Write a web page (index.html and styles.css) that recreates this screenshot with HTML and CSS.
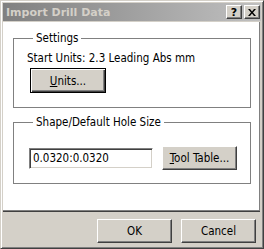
FILE: index.html
```html
<!DOCTYPE html>
<html>
<head>
<meta charset="utf-8">
<link rel="stylesheet" href="styles.css">
</head>
<body>
<div class="window">
  <div class="titlebar">
    <span class="title">Import Drill Data</span>
    <div class="tbtns">
      <span class="tbtn help">?</span>
      <span class="tbtn close"><svg width="8" height="7" viewBox="0 0 8 7"><path d="M0 0h2l2 2.5L6 0h2L5 3.5 8 7H6L4 4.5 2 7H0l3-3.5z" fill="#000"/></svg></span>
    </div>
  </div>
  <div class="panel">
    <fieldset class="group g1">
      <legend>Settings</legend>
      <div class="info">Start Units: 2.3 Leading Abs mm</div>
      <div class="btn default units"><span class="inner"><u>U</u>nits...</span></div>
    </fieldset>
    <fieldset class="group g2">
      <legend>Shape/Default Hole Size</legend>
      <div class="row">
        <div class="input">0.0320:0.0320</div>
        <div class="btn tool"><span class="inner"><u>T</u>ool Table...</span></div>
      </div>
    </fieldset>
  </div>
  <div class="footer">
    <div class="btn ok"><span class="inner">OK</span></div>
    <div class="btn cancel"><span class="inner">Cancel</span></div>
  </div>
</div>
</body>
</html>
```
FILE: styles.css
```css
html, body { margin: 0; padding: 0; }
body {
  background: #d4d0c8;
  font-family: "DejaVu Sans Condensed", "DejaVu Sans", sans-serif;
  font-size: 11.5px;
  color: #000;
}
.window {
  width: 264px;
  height: 249px;
  box-sizing: border-box;
  border-left: 1px solid #d4d0c8;
  border-top: 1px solid #d4d0c8;
  border-right: 1px solid #404040;
  border-bottom: 1px solid #404040;
  box-shadow: inset 1px 1px #fff, inset -1px -1px #808080;
  padding: 2px;
  display: flex;
  flex-direction: column;
}
.titlebar {
  height: 18px;
  background: linear-gradient(to right, #808080, #c0c0c0);
  display: flex;
  align-items: center;
  justify-content: space-between;
  padding: 0 1px 0 3px;
}
.title {
  color: #d4d0c8;
  font-family: "DejaVu Sans", sans-serif;
  font-weight: bold;
  font-size: 11px;
}
.tbtns { display: flex; gap: 2px; }
.tbtn {
  width: 16px;
  height: 14px;
  box-sizing: border-box;
  background: #d4d0c8;
  border-top: 1px solid #fff;
  border-left: 1px solid #fff;
  border-right: 1px solid #404040;
  border-bottom: 1px solid #404040;
  box-shadow: inset -1px -1px #808080;
  display: flex;
  align-items: center;
  justify-content: center;
  font-family: "DejaVu Sans", sans-serif;
  font-weight: bold;
  font-size: 11px;
  line-height: 1;
}
.panel {
  background: #fff;
  margin-top: 1px;
  height: 178px;
  border-bottom: 1px solid #808080;
  box-shadow: 0 1px #404040;
  margin-right: 1px;
  border-right: 1px solid #808080;
  padding: 10px 8px 0 10px;
  display: flex;
  flex-direction: column;
  gap: 8px;
}
.group {
  margin: 0;
  border: 1px solid #808080;
  padding: 0 13px 0 15px;
}
.group legend {
  padding: 0 3px;
  margin-left: 4px;
  line-height: 13px;
}
.g1 { height: 74px; }
.g2 { height: 66px; }
.info { margin-top: 7px; line-height: 13px; margin-left: -2px; }
.btn {
  box-sizing: border-box;
  width: 75px;
  height: 23px;
  background: #d4d0c8;
  border-top: 1px solid #fff;
  border-left: 1px solid #fff;
  border-right: 1px solid #404040;
  border-bottom: 1px solid #404040;
  box-shadow: inset -1px -1px #808080;
  display: flex;
  align-items: center;
  justify-content: center;
}
.btn.default {
  border: 1px solid #000;
  box-shadow: inset 1px 1px #fff, inset -1px -1px #404040, inset -2px -2px #808080;
}
.units { margin-top: 3px; margin-left: 1px; width: 76px; height: 25px; }
.row { display: flex; align-items: center; margin-top: 17px; gap: 9px; }
.input {
  width: 124px;
  height: 21px;
  box-sizing: border-box;
  border-top: 1px solid #808080;
  border-left: 1px solid #808080;
  border-right: 1px solid #fff;
  border-bottom: 1px solid #fff;
  box-shadow: inset 1px 1px #404040, inset -1px -1px #d4d0c8;
  padding: 0 3px;
  line-height: 19px;
}
.tool { width: 75px; height: 24px; }
.footer {
  flex: 1;
  display: flex;
  justify-content: flex-end;
  align-items: flex-start;
  gap: 9px;
  padding: 8px 5px 0 0;
}
.ok, .cancel { width: 75px; height: 24px; }
```
